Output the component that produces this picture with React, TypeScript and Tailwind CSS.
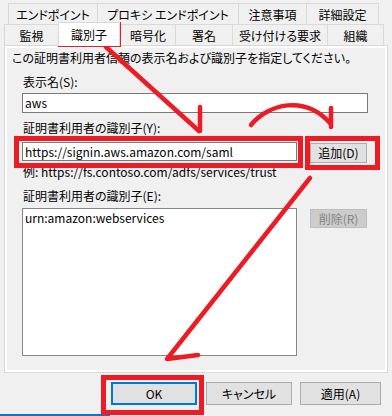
import React from "react"

const row1 = [
  { label: "エンドポイント", w: "w-[89px]" },
  { label: "プロキシ エンドポイント", w: "w-[141px]" },
  { label: "注意事項", w: "w-[68px]" },
  { label: "詳細設定", w: "w-[73px]" },
]

const row2 = [
  { label: "監視", w: "w-[54px]" },
  { label: "識別子", w: "w-[62px]", active: true },
  { label: "暗号化", w: "w-[55px]" },
  { label: "署名", w: "w-[57px]" },
  { label: "受け付ける要求", w: "w-[95px]" },
  { label: "組織", w: "w-[57px]" },
]

function Tab({ label, w, active, last }: { label: string; w: string; active?: boolean; last?: boolean }) {
  if (active) {
    return (
      <div
        className={`${w} relative z-10 h-[24px] -mb-px flex items-center justify-center bg-white border border-b-0 border-[#d9d9d9] pt-px`}
      >
        {label}
      </div>
    )
  }
  return (
    <div
      className={`${w} h-[21px] flex items-center justify-center bg-[#f0f0f0] border-t border-l border-[#d9d9d9] ${last ? "border-r" : ""} pt-[2px] whitespace-nowrap`}
    >
      {label}
    </div>
  )
}

function WinButton({ children, className = "", disabled, isDefault }: { children: React.ReactNode; className?: string; disabled?: boolean; isDefault?: boolean }) {
  const look = disabled
    ? "bg-[#cccccc] border border-[#bfbfbf] text-[#838383]"
    : isDefault
      ? "bg-[#e1e1e1] border-2 border-[#0078d7]"
      : "bg-[#e1e1e1] border border-[#adadad]"
  return <div className={`flex items-center justify-center ${look} ${className}`}>{children}</div>
}

function Annotations() {
  return (
    <svg
      className="absolute inset-0 pointer-events-none"
      width="392"
      height="416"
      viewBox="0 0 392 416"
      fill="none"
      stroke="#ed1c24"
      strokeWidth="5"
    >
      {/* boxes */}
      <rect x="60.5" y="24.5" width="58" height="20" />
      <rect x="16.5" y="138.5" width="284" height="27" />
      <rect x="307.5" y="138.5" width="70" height="29" />
      <rect x="103.5" y="377.5" width="98" height="35" />
      {/* arrows */}
      <g strokeLinecap="round" strokeLinejoin="round" strokeWidth="4.5">
        <path d="M106 47 L199 131" />
        <path d="M200 107 L200 131" />
        <path d="M251 125 C268 104 305 94 331 124" />
        <path d="M331 108 L331 127" />
        <path d="M310 178 L167 359 L198 355" />
      </g>
    </svg>
  )
}

export default function App() {
  return (
    <div className="relative w-[392px] h-[416px] overflow-hidden bg-[#f0f0f0] text-black text-[12px] leading-[16px] font-['Noto_Sans_CJK_JP',sans-serif] [font-feature-settings:'palt']">
      <div className="pt-[3px]">
        <div className="flex ml-[8px]">
          {row1.map((t, i) => (
            <Tab key={t.label} label={t.label} w={t.w} last={i === row1.length - 1} />
          ))}
        </div>
        <div className="flex items-end ml-[4px] h-[21px]">
          {row2.map((t, i) => (
            <Tab key={t.label} label={t.label} w={t.w} active={t.active} last={i === row2.length - 1} />
          ))}
        </div>
      </div>

      <div className="mx-[4px] h-[328px] border border-[#d9d9d9] bg-white p-[2px]">
        <div className="h-full bg-[#f0f0f0] flex flex-col pt-[2px]">
          <p className="ml-[5px] whitespace-nowrap">この証明書利用者信頼の表示名および識別子を指定してください。</p>

          <div className="ml-[16px] mt-[8px]">表示名(S):</div>
          <div className="ml-[15px] mt-[3px] w-[346px] h-[20px] bg-white border border-[#7a7a7a] flex items-center px-[2px]">
            aws
          </div>

          <div className="ml-[16px] mt-[7px]">証明書利用者の識別子(Y):</div>
          <div className="flex ml-[15px] mt-[6px]">
            <div className="w-[275px] h-[19px] bg-white border border-[#7a7a7a] flex items-center px-[2px] whitespace-nowrap">
              https://signin.aws.amazon.com/saml
            </div>
            <WinButton className="ml-[13px] mt-px w-[57px] h-[20px]">追加(D)</WinButton>
          </div>

          <div className="ml-[16px] mt-px whitespace-nowrap">例: https://fs.contoso.com/adfs/services/trust</div>

          <div className="ml-[16px] mt-[8px]">証明書利用者の識別子(E):</div>
          <div className="flex ml-[15px] mt-[4px]">
            <div className="w-[275px] h-[148px] bg-white border border-[#828790] px-[2px] pt-px">
              urn:amazon:webservices
            </div>
            <WinButton disabled className="ml-[13px] mt-px w-[57px] h-[19px]">
              削除(R)
            </WinButton>
          </div>
        </div>
      </div>

      <div className="flex mt-[9px] ml-[111px]">
        <WinButton isDefault className="w-[86px] h-[23px]">OK</WinButton>
        <WinButton className="ml-[9px] w-[86px] h-[23px]">キャンセル</WinButton>
        <WinButton className="ml-[8px] w-[81px] h-[23px]">適用(A)</WinButton>
      </div>
      <div className="mt-[9px] w-[110px] h-[2px] bg-[#0078d7]" />

      <Annotations />
    </div>
  )
}
